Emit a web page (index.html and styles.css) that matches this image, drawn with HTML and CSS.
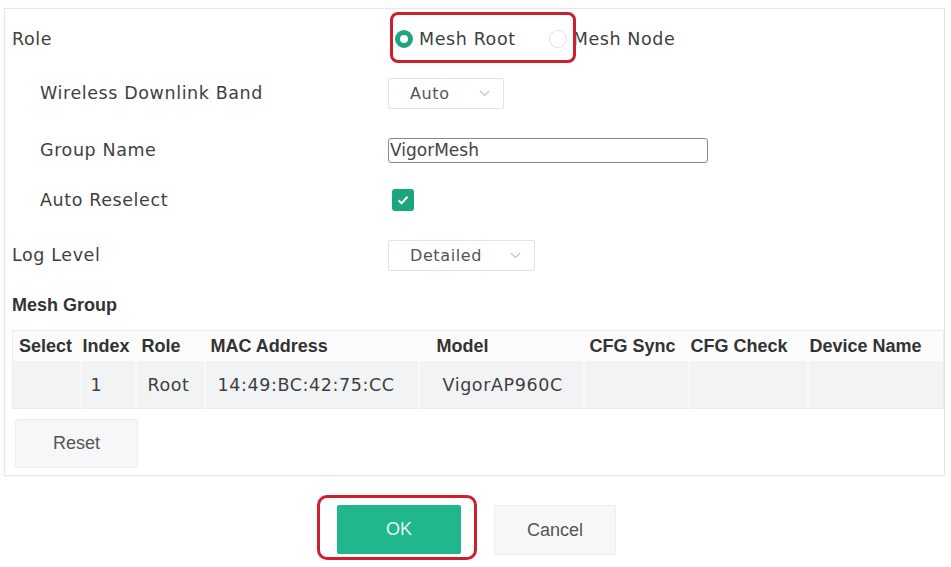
FILE: index.html
```html
<!DOCTYPE html>
<html lang="en">
<head>
    <meta charset="UTF-8">
    <meta name="viewport" content="width=device-width, initial-scale=1.0">
    <title>Mesh Setup</title>
    <link rel="stylesheet" href="styles.css">
</head>
<body>
    <div class="panel">
        <div class="form-row row-role">
            <span class="label">Role</span>
            <div class="radios">
                <label class="radio"><span class="dot checked"></span>Mesh Root</label>
                <label class="radio"><span class="dot"></span>Mesh Node</label>
                <span class="mark-box"></span>
            </div>
        </div>
        <div class="form-row row-band">
            <span class="label sub">Wireless Downlink Band</span>
            <div class="select select-auto">
                <span>Auto</span>
                <svg class="chev" width="11" height="7" viewBox="0 0 11 7"><path d="M1 1l4.5 4.5L10 1" fill="none" stroke="#c4c4c4" stroke-width="1.2"/></svg>
            </div>
        </div>
        <div class="form-row row-group">
            <span class="label sub">Group Name</span>
            <div class="text-input">VigorMesh</div>
        </div>
        <div class="form-row row-auto">
            <span class="label sub">Auto Reselect</span>
            <span class="checkbox">
                <svg width="12" height="10" viewBox="0 0 12 10"><path d="M1.5 5.2l3 3L10.5 1.8" fill="none" stroke="#fff" stroke-width="2"/></svg>
            </span>
        </div>
        <div class="form-row row-log">
            <span class="label">Log Level</span>
            <div class="select select-log">
                <span>Detailed</span>
                <svg class="chev" width="11" height="7" viewBox="0 0 11 7"><path d="M1 1l4.5 4.5L10 1" fill="none" stroke="#c4c4c4" stroke-width="1.2"/></svg>
            </div>
        </div>

        <div class="section-title">Mesh Group</div>
        <table class="mesh-table">
            <colgroup>
                <col style="width:68px">
                <col style="width:55px">
                <col style="width:69px">
                <col style="width:214px">
                <col style="width:165px">
                <col style="width:105px">
                <col style="width:119px">
                <col style="width:136px">
            </colgroup>
            <thead>
                <tr>
                    <th>Select</th>
                    <th class="tight">Index</th>
                    <th>Role</th>
                    <th>MAC Address</th>
                    <th class="model">Model</th>
                    <th>CFG Sync</th>
                    <th class="tight">CFG Check</th>
                    <th class="tight">Device Name</th>
                </tr>
            </thead>
            <tbody>
                <tr>
                    <td></td>
                    <td class="c-index">1</td>
                    <td class="c-role">Root</td>
                    <td class="c-mac">14:49:BC:42:75:CC</td>
                    <td class="c-model">VigorAP960C</td>
                    <td></td>
                    <td></td>
                    <td></td>
                </tr>
            </tbody>
        </table>
        <button class="btn btn-reset">Reset</button>
    </div>

    <div class="actions">
        <span class="mark-ok"><button class="btn btn-ok">OK</button></span>
        <button class="btn btn-cancel">Cancel</button>
    </div>
</body>
</html>
```

FILE: styles.css
```css
body {
    margin: 0;
    background: #fff;
    color: #3f3f3f;
    font-family: 'DejaVu Sans', Verdana, sans-serif;
    font-size: 17.5px;
    letter-spacing: 0.6px;
}
.panel {
    margin: 8px 0 0 4px;
    width: 941px;
    border: 1px solid #e6e6e6;
    box-shadow: 0 0 2px rgba(0,0,0,0.05);
    padding: 3px 0 7px 7px;
    box-sizing: border-box;
}
.form-row {
    display: flex;
    align-items: center;
}
.row-role { height: 54px; }
.row-band { height: 54px; }
.row-group { height: 60px; }
.row-auto { height: 40px; }
.row-log { height: 70px; }
.label {
    width: 376px;
    flex-shrink: 0;
}
.label.sub {
    padding-left: 28px;
    box-sizing: border-box;
}

/* role radios */
.radios {
    position: relative;
    display: flex;
    align-items: center;
    padding-left: 7px;
}
.radio {
    display: flex;
    align-items: center;
    gap: 6px;
    margin-right: 33px;
}
.dot {
    width: 18px;
    height: 18px;
    border-radius: 50%;
    border: 1px solid #e2e2e2;
    box-sizing: border-box;
    background: #fff;
}
.dot.checked {
    border: 5px solid #1ea57f;
}
.mark-box {
    position: absolute;
    left: 2px;
    top: -17px;
    width: 186px;
    height: 51px;
    border: 3px solid #cc1f30;
    border-radius: 8px;
    box-sizing: border-box;
}

/* selects & inputs */
.select {
    display: flex;
    align-items: center;
    justify-content: space-between;
    height: 31px;
    border: 1px solid #e3e3e3;
    border-radius: 2px;
    padding: 0 13px 0 21px;
    box-sizing: border-box;
    color: #555;
    font-size: 16px;
}
.select-auto { width: 116px; }
.select-log { width: 147px; }
.text-input {
    width: 320px;
    height: 25px;
    border: 1px solid #8a8a8a;
    border-radius: 3px;
    box-sizing: border-box;
    padding-left: 1px;
    line-height: 23px;
    font-size: 17px;
    color: #444;
    letter-spacing: 0;
}
.checkbox {
    display: flex;
    align-items: center;
    justify-content: center;
    width: 22px;
    height: 22px;
    margin-left: 4px;
    border-radius: 3px;
    background: #19a67c;
}

/* mesh group table */
.section-title {
    font-family: 'Liberation Sans', Arial, sans-serif;
    font-weight: bold;
    font-size: 18px;
    line-height: 20px;
    color: #333;
    letter-spacing: 0;
    margin-top: 5px;
}
.mesh-table {
    margin-top: 15px;
    width: 931px;
    table-layout: fixed;
    border-collapse: collapse;
    border: 1px solid #ececec;
}
.mesh-table th {
    font-family: 'Liberation Sans', Arial, sans-serif;
    font-size: 18px;
    font-weight: bold;
    color: #333;
    letter-spacing: 0;
    text-align: left;
    height: 30px;
    padding: 0 0 0 6px;
    white-space: nowrap;
    background: #fcfcfc;
}
.mesh-table th.tight { padding-left: 2px; }
.mesh-table th.model { padding-left: 18px; }
.mesh-table td {
    height: 47px;
    background: #f2f3f5;
    border-left: 2px solid #f9f9fa;
    padding: 0;
    color: #3f3f3f;
    white-space: nowrap;
}
.mesh-table td:first-child { border-left: none; }
.c-index { padding-left: 9px !important; }
.c-role { padding-left: 11px !important; }
.c-mac { padding-left: 12px !important; }
.c-model { padding-left: 23px !important; }

/* buttons */
.btn {
    font-family: 'Liberation Sans', Arial, sans-serif;
    font-size: 18px;
    letter-spacing: 0;
    border-radius: 2px;
    cursor: pointer;
}
.btn-reset {
    display: block;
    margin: 10px 0 0 3px;
    width: 123px;
    height: 49px;
    background: #f6f7f9;
    border: 1px solid #efefef;
    color: #555;
}
.actions {
    display: flex;
    align-items: flex-start;
    gap: 17px;
    margin-top: 19px;
    padding-left: 317px;
}
.mark-ok {
    display: inline-block;
    padding: 7px 13px 3px 17px;
    border: 3px solid #cc1f30;
    border-radius: 10px;
}
.btn-ok {
    display: block;
    width: 124px;
    height: 49px;
    border: none;
    background: #20b68e;
    color: #e3f7f0;
}
.btn-cancel {
    margin-top: 10px;
    width: 122px;
    height: 50px;
    background: #f8f8f8;
    border: 1px solid #eeeeee;
    color: #555;
}
```
